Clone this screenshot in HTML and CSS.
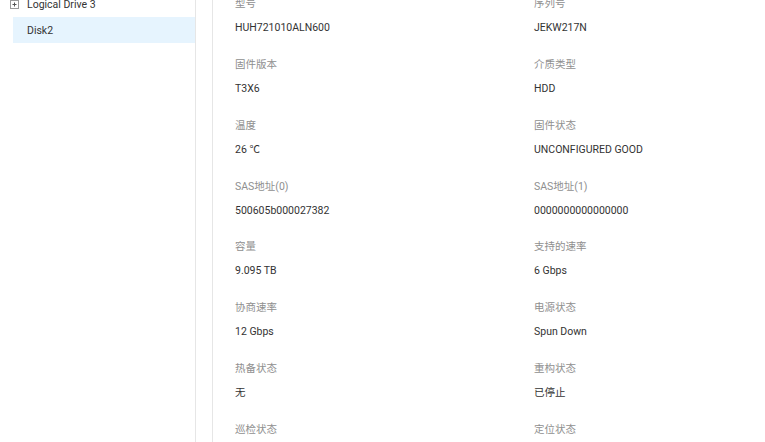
FILE: index.html
```html
<!DOCTYPE html>
<html lang="zh-CN">
<head>
<meta charset="utf-8">
<title>Disk2</title>
<link rel="stylesheet" href="styles.css">
</head>
<body>
<div class="page">
  <aside class="sidebar">
    <ul class="tree">
      <li class="node">
        <span class="toggle">
          <svg width="9" height="9" viewBox="0 0 9 9"><rect x="0.5" y="0.5" width="8" height="8" fill="#fff" stroke="#9a9a9a"/><path d="M2.5 4.5h4M4.5 2.5v4" stroke="#555" stroke-width="1"/></svg>
        </span>
        <span class="node-text">Logical Drive 3</span>
      </li>
      <li class="node child active"><span class="node-text">Disk2</span></li>
    </ul>
  </aside>
  <main class="content">
    <div class="props">
      <div class="prop"><div class="label">型号</div><div class="value">HUH721010ALN600</div></div>
      <div class="prop"><div class="label">序列号</div><div class="value">JEKW217N</div></div>
      <div class="prop"><div class="label">固件版本</div><div class="value">T3X6</div></div>
      <div class="prop"><div class="label">介质类型</div><div class="value">HDD</div></div>
      <div class="prop"><div class="label">温度</div><div class="value">26 ℃</div></div>
      <div class="prop"><div class="label">固件状态</div><div class="value">UNCONFIGURED GOOD</div></div>
      <div class="prop"><div class="label">SAS地址(0)</div><div class="value">500605b000027382</div></div>
      <div class="prop"><div class="label">SAS地址(1)</div><div class="value">0000000000000000</div></div>
      <div class="prop"><div class="label">容量</div><div class="value">9.095 TB</div></div>
      <div class="prop"><div class="label">支持的速率</div><div class="value">6 Gbps</div></div>
      <div class="prop"><div class="label">协商速率</div><div class="value">12 Gbps</div></div>
      <div class="prop"><div class="label">电源状态</div><div class="value">Spun Down</div></div>
      <div class="prop"><div class="label">热备状态</div><div class="value">无</div></div>
      <div class="prop"><div class="label">重构状态</div><div class="value">已停止</div></div>
      <div class="prop"><div class="label">巡检状态</div><div class="value">无</div></div>
      <div class="prop"><div class="label">定位状态</div><div class="value">关闭</div></div>
    </div>
  </main>
</div>
</body>
</html>
```
FILE: styles.css
```css
html, body {
  margin: 0;
  padding: 0;
  background: #fff;
  overflow: hidden;
}
body {
  font-family: Roboto, "Noto Sans CJK SC", sans-serif;
  font-size: 10.5px;
  color: #333;
}
.page {
  display: flex;
  height: 442px;
}
.sidebar {
  width: 195px;
  flex: none;
  border-right: 1px solid #e6e6e6;
}
.tree {
  list-style: none;
  margin: -9px 0 0 0;
  padding: 0;
}
.node {
  display: flex;
  align-items: center;
  height: 26px;
  padding-left: 10px;
  color: #333;
}
.toggle {
  display: flex;
  width: 9px;
  height: 9px;
  margin-right: 8px;
}
.node.child {
  margin-left: 13px;
  padding-left: 14px;
}
.node.active {
  background: #e6f4fe;
}
.content {
  flex: 1;
  margin-left: 16px;
  border-left: 1px solid #e6e6e6;
  padding-left: 22px;
}
.props {
  display: grid;
  grid-template-columns: 299px 1fr;
  row-gap: 20.85px;
  margin-top: -4px;
}
.prop {
  display: flex;
  flex-direction: column;
  gap: 8px;
}
.label {
  line-height: 16px;
  color: #8f8f8f;
}
.value {
  line-height: 16px;
  color: #333;
}
```
